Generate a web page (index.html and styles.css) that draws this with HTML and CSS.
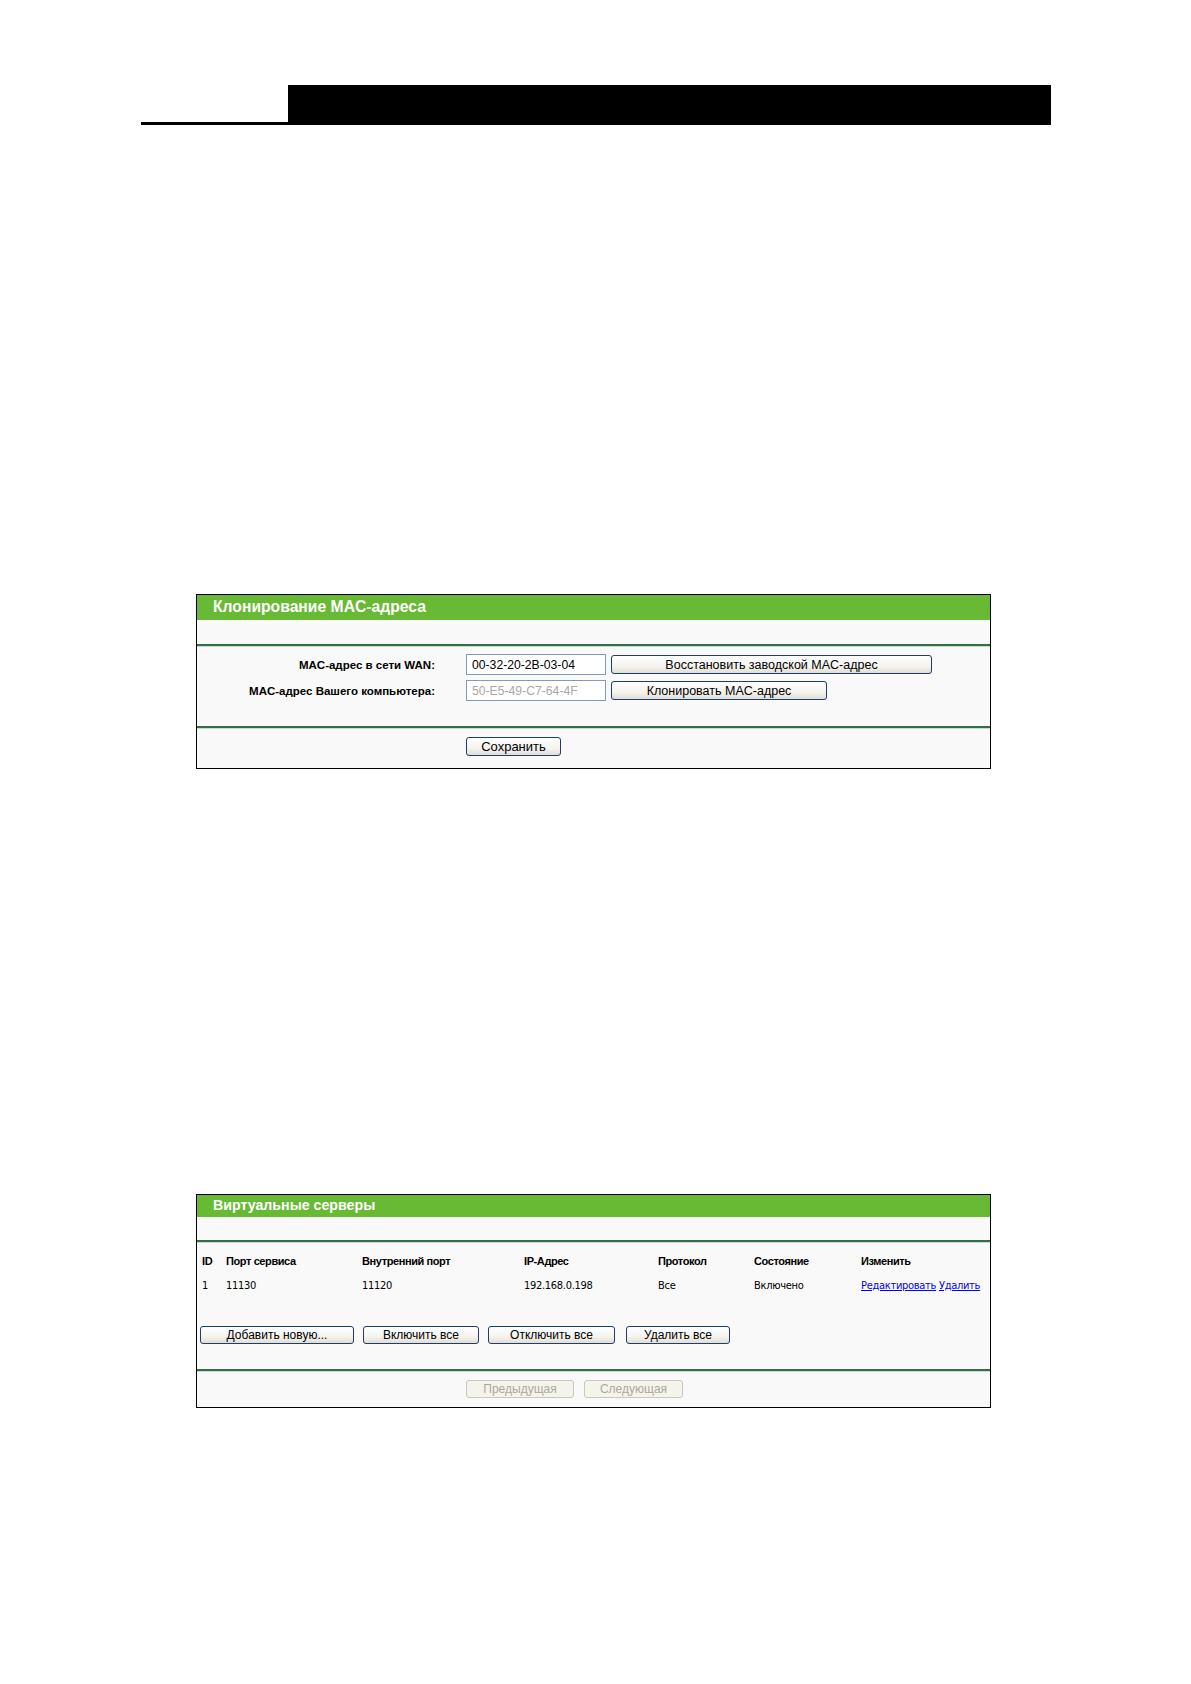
FILE: index.html
```html
<!DOCTYPE html>
<html lang="ru">
<head>
  <meta charset="UTF-8">
  <title>MAC / Virtual Servers</title>
  <link rel="stylesheet" href="styles.css">
</head>
<body>
  <div class="page-head">
    <div class="page-head-rule"></div>
    <div class="page-head-bar"></div>
  </div>

  <!-- MAC clone panel -->
  <div class="panel panel-mac">
    <div class="panel-title">Клонирование MAC-адреса</div>
    <div class="panel-gap"></div>
    <div class="mac-form">
      <div class="mac-row">
        <label class="mac-label">MAC-адрес в сети WAN:</label>
        <input class="mac-input" type="text" value="00-32-20-2B-03-04">
        <button class="btn btn-restore">Восстановить заводской MAC-адрес</button>
      </div>
      <div class="mac-row">
        <label class="mac-label">MAC-адрес Вашего компьютера:</label>
        <input class="mac-input" type="text" value="50-E5-49-C7-64-4F" disabled>
        <button class="btn btn-clone">Клонировать MAC-адрес</button>
      </div>
    </div>
    <div class="panel-foot mac-foot">
      <button class="btn btn-save">Сохранить</button>
    </div>
  </div>

  <!-- Virtual servers panel -->
  <div class="panel panel-vs">
    <div class="panel-title vs-title">Виртуальные серверы</div>
    <div class="panel-gap vs-gap"></div>
    <div class="vs-body">
      <table class="vs-table">
        <tr class="vs-head">
          <td class="c-id">ID</td>
          <td class="c-port">Порт сервиса</td>
          <td class="c-int">Внутренний порт</td>
          <td class="c-ip">IP-Адрес</td>
          <td class="c-proto">Протокол</td>
          <td class="c-state">Состояние</td>
          <td>Изменить</td>
        </tr>
        <tr>
          <td>1</td>
          <td>11130</td>
          <td>11120</td>
          <td>192.168.0.198</td>
          <td>Все</td>
          <td>Включено</td>
          <td><a href="#">Редактировать</a> <a href="#">Удалить</a></td>
        </tr>
      </table>
      <div class="vs-actions">
        <button class="btn btn-add">Добавить новую...</button>
        <button class="btn btn-on">Включить все</button>
        <button class="btn btn-off">Отключить все</button>
        <button class="btn btn-del">Удалить все</button>
      </div>
    </div>
    <div class="panel-foot vs-foot">
      <button class="btn btn-prev" disabled>Предыдущая</button>
      <button class="btn btn-next" disabled>Следующая</button>
    </div>
  </div>
</body>
</html>
```

FILE: styles.css
```css
* { box-sizing: border-box; }
body {
  margin: 0;
  background: #fff;
  font-family: "Liberation Sans", Arial, sans-serif;
  color: #000;
}

/* top header bar */
.page-head {
  display: flex;
  margin: 85px 0 0 141px;
  width: 910px;
  height: 40px;
}
.page-head-rule {
  width: 147px;
  border-bottom: 3px solid #000;
}
.page-head-bar {
  flex: 1;
  background: #000;
}

/* panels */
.panel {
  margin-left: 196px;
  width: 795px;
  border: 1px solid #000;
  background: #f9f9f9;
}
.panel-mac { margin-top: 469px; height: 175px; }
.panel-vs { margin-top: 425px; height: 214px; }

.panel-title {
  background: #68b934;
  color: #fff;
  font-weight: bold;
  font-size: 15.7px;
  height: 25px;
  line-height: 24px;
  padding-left: 16px;
}
.vs-title { height: 22px; line-height: 21px; font-size: 14.2px; }
.panel-gap {
  height: 26px;
  border-bottom: 2px solid #2f7048;
}
.vs-gap { height: 25px; }
.panel-foot {
  border-top: 2px solid #2f7048;
  box-shadow: inset 0 1px 0 #c8dccd;
}

/* MAC form */
.mac-form {
  height: 80px;
  padding-top: 8px;
  box-shadow: inset 0 1px 0 #c8dccd;
}
.mac-row {
  display: flex;
  align-items: center;
  height: 21px;
  margin-bottom: 5px;
}
.mac-label {
  width: 238px;
  text-align: right;
  font-weight: bold;
  font-size: 11.5px;
  margin-right: 31px;
}
.mac-input {
  width: 140px;
  height: 21px;
  border: 1px solid #7f9db9;
  background: #fff;
  font-family: inherit;
  font-size: 12.2px;
  padding: 0 5px;
  color: #000;
  margin: 0 5px 0 0;
}
.mac-input:disabled { color: #a8a8a8; }

.btn {
  font-family: inherit;
  font-size: 12.5px;
  color: #000;
  height: 19px;
  padding: 0;
  border: 1px solid #1c3d70;
  border-radius: 3px;
  background: linear-gradient(#ffffff, #f4f3ee 60%, #e2ded3);
}
.btn:disabled {
  color: #aca899;
  border-color: #cac8bb;
  background: #f5f4ea;
}
.btn-restore { width: 321px; }
.btn-clone { width: 216px; }

.mac-foot { height: 39px; padding: 9px 0 0 269px; }
.btn-save { width: 95px; font-size: 13px; }

/* virtual servers */
.vs-body {
  height: 127px;
  padding: 7px 0 0 4px;
  box-shadow: inset 0 1px 0 #c8dccd;
}
.vs-table {
  border-collapse: collapse;
  font-size: 11px;
  font-family: "DejaVu Sans Condensed", "Liberation Sans", sans-serif;
  letter-spacing: -0.3px;
}
.vs-table td {
  padding: 0 0 0 1px;
  height: 24px;
  vertical-align: middle;
  white-space: nowrap;
}
.vs-head td { font-weight: bold; font-family: "Liberation Sans", sans-serif; letter-spacing: -0.4px; }
.c-id { width: 24px; }
.c-port { width: 136px; }
.c-int { width: 162px; }
.c-ip { width: 134px; }
.c-proto { width: 96px; }
.c-state { width: 107px; }
.vs-table a { color: #0000ff; }

.vs-actions {
  display: flex;
  gap: 9px;
  margin-top: 29px;
}
.vs-actions .btn { height: 18px; font-size: 12px; }
.btn-add { width: 154px; margin-left: -1px; }
.btn-on { width: 116px; }
.btn-off { width: 127px; }
.btn-del { width: 104px; margin-left: 2px; }

.vs-foot {
  height: 36px;
  display: flex;
  gap: 10px;
  padding: 9px 0 0 269px;
}
.btn-prev { width: 108px; height: 18px; font-size: 12px; }
.btn-next { width: 99px; height: 18px; font-size: 12px; }
```
